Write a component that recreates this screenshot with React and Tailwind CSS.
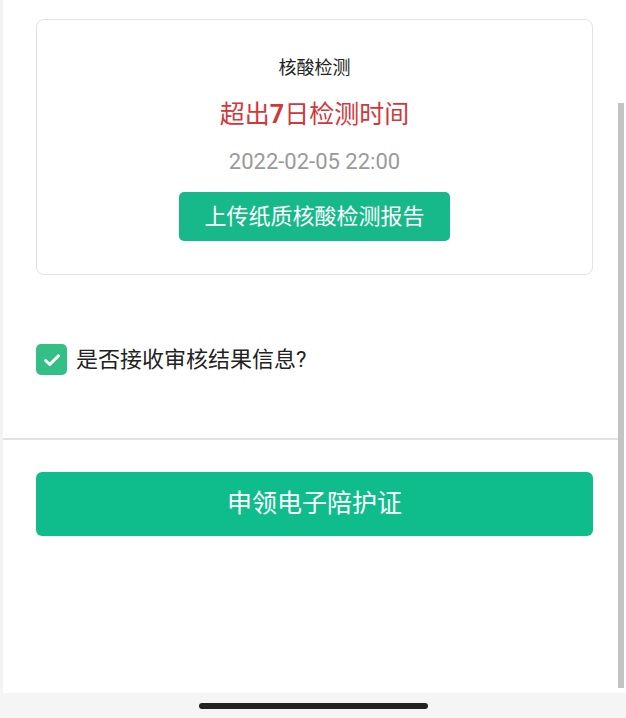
import React, { useState } from 'react';

const font = { fontFamily: 'Roboto, "Noto Sans CJK SC", sans-serif' };

function CheckIcon() {
  return (
    <svg viewBox="0 0 24 24" className="w-[22px] h-[22px]" fill="none" stroke="white" strokeWidth="3.2" strokeLinecap="round" strokeLinejoin="round">
      <path d="M5 12.5l4.5 4.5L19 7.5" />
    </svg>
  );
}

export default function App() {
  const [agree, setAgree] = useState(true);

  return (
    <div className="w-[626px] h-[718px] flex flex-col bg-[#f5f5f5] overflow-hidden" style={font}>
      <div className="flex flex-1 min-h-0">
        <div className="w-[3px] bg-[#f3f3f3]" />
        <div className="flex-1 bg-white flex flex-col">
          {/* Test card */}
          <div className="pl-[33px] pr-[25px] pt-[19px]">
            <div className="h-[256px] border border-[#e3e3e3] rounded-[8px] flex flex-col items-center">
              <div className="mt-[37px] text-[18px] leading-[22px] text-[#222]">核酸检测</div>
              <div className="mt-[21px] text-[25px] leading-[30px] text-[#d2383b]">
                超出<span className="font-bold">7</span>日检测时间
              </div>
              <div className="mt-[18px] text-[22px] leading-[28px] text-[#9a9a9a]">2022-02-05 22:00</div>
              <button className="mt-[16px] w-[271px] h-[49px] rounded-[5px] bg-[#17b98a] text-white text-[22px]">
                上传纸质核酸检测报告
              </button>
            </div>
          </div>

          {/* Agreement */}
          <div className="px-[33px] mt-[69px] flex items-center gap-[9px]">
            <button
              onClick={() => setAgree(!agree)}
              className={`w-[31px] h-[31px] rounded-[5px] flex items-center justify-center ${agree ? 'bg-[#33bf86]' : 'border border-[#ccc]'}`}
            >
              {agree && <CheckIcon />}
            </button>
            <span className="text-[22px] leading-[28px] text-[#222]">是否接收审核结果信息?</span>
          </div>

          <div className="mt-[63px] h-[2px] bg-[#e2e2e2]" />

          <div className="pl-[33px] pr-[25px] pt-[32px]">
            <button className="w-full h-[64px] rounded-[6px] bg-[#0fbd8c] text-white text-[25px]">
              申领电子陪护证
            </button>
          </div>
        </div>
        <div className="w-[8px] bg-white flex flex-col">
          <div className="h-[103px]" />
          <div className="w-[6px] h-[585px] bg-[#c3c3c3]" />
        </div>
      </div>
      <div className="h-[25px] flex items-center justify-center">
        <div className="w-[229px] h-[6px] rounded-full bg-[#222]" />
      </div>
    </div>
  );
}
